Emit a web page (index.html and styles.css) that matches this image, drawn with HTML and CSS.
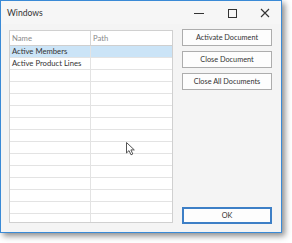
FILE: index.html
```html
<!DOCTYPE html>
<html>
<head>
<meta charset="utf-8">
<link rel="stylesheet" href="styles.css">
</head>
<body>
<div class="stage">
  <div class="window">
    <div class="titlebar">
      <span class="title">Windows</span>
      <div class="controls">
        <span class="ctl"><svg width="12" height="12" viewBox="0 0 12 12"><line x1="1" y1="6.5" x2="11" y2="6.5" stroke="#333" stroke-width="1"/></svg></span>
        <span class="ctl"><svg width="12" height="12" viewBox="0 0 12 12"><rect x="2.5" y="2.5" width="8" height="8" fill="none" stroke="#333" stroke-width="1"/></svg></span>
        <span class="ctl"><svg width="12" height="12" viewBox="0 0 12 12"><path d="M2 2 L10 10 M10 2 L2 10" stroke="#333" stroke-width="1.1"/></svg></span>
      </div>
    </div>
    <div class="content">
      <div class="grid">
        <div class="row head"><div class="c1">Name</div><div class="c2">Path</div></div>
        <div class="row sel"><div class="c1">Active Members</div><div class="c2"></div></div>
        <div class="row"><div class="c1">Active Product Lines</div><div class="c2"></div></div>
        <div class="row"><div class="c1"></div><div class="c2"></div></div>
        <div class="row"><div class="c1"></div><div class="c2"></div></div>
        <div class="row"><div class="c1"></div><div class="c2"></div></div>
        <div class="row"><div class="c1"></div><div class="c2"></div></div>
        <div class="row"><div class="c1"></div><div class="c2"></div></div>
        <div class="row"><div class="c1"></div><div class="c2"></div></div>
        <div class="row"><div class="c1"></div><div class="c2"></div></div>
        <div class="row"><div class="c1"></div><div class="c2"></div></div>
        <div class="row"><div class="c1"></div><div class="c2"></div></div>
        <div class="row"><div class="c1"></div><div class="c2"></div></div>
        <div class="row"><div class="c1"></div><div class="c2"></div></div>
        <div class="row"><div class="c1"></div><div class="c2"></div></div>
        <div class="row"><div class="c1"></div><div class="c2"></div></div>
        <svg class="cursor" width="10" height="14" viewBox="0 0 10 14"><path d="M0.5 0.5 L0.5 11 L3 8.6 L5 12.8 L6.8 12 L4.9 7.9 L8.3 7.9 Z" fill="#fff" stroke="#555" stroke-width="1" stroke-linejoin="round"/></svg>
      </div>
      <div class="buttons">
        <button class="btn">Activate Document</button>
        <button class="btn">Close Document</button>
        <button class="btn">Close All Documents</button>
        <button class="btn ok">OK</button>
      </div>
    </div>
  </div>
</div>
</body>
</html>
```
FILE: styles.css
```css
* { box-sizing: border-box; }
html, body { margin: 0; padding: 0; background: #ffffff; }
body { font-family: "Lato", "Noto Sans", sans-serif; }
.stage { width: 292px; height: 243px; position: relative; overflow: hidden; }
.window {
  width: 282px; height: 233px;
  border: 1px solid #3a8ad6;
  background: #f4f4f4;
  box-shadow: 3px 3px 6px rgba(0,0,0,0.45);
  display: flex; flex-direction: column;
}
.titlebar {
  height: 23px; display: flex; align-items: center; justify-content: space-between;
  padding-left: 6px; background: #f6f6f6;
}
.title { font-size: 8.6px; color: #333; }
.controls { display: flex; height: 100%; }
.ctl { width: 33px; height: 100%; display: flex; align-items: center; justify-content: center; }
.content { flex: 1; display: flex; padding: 6px 8px 8px 8px; gap: 9px; }
.grid {
  width: 164px; height: 193px; border: 1px solid #d0d0d0; background: #fff;
  overflow: hidden; position: relative;
}
.row { display: flex; height: 12px; border-bottom: 1px solid #e3e3e3; font-size: 7.7px; line-height: 11px; color: #333; }
.row.head { height: 15px; border-bottom: 1px solid #cfcfcf; color: #8a8a8a; line-height: 14px; }
.row.sel { background: #cbe4f7; }
.c1 { width: 81px; border-right: 1px solid #e3e3e3; padding-left: 2px; white-space: nowrap; overflow: hidden; }
.head .c1 { border-right-color: #d6d6d6; }
.c2 { flex: 1; padding-left: 2px; }
.cursor { position: absolute; left: 116px; top: 111px; }
.buttons { width: 90px; display: flex; flex-direction: column; gap: 5px; margin-top: -1px; }
.btn {
  height: 17px; border: 1px solid #adadad; background: #fdfdfd; font-family: inherit;
  font-size: 7.3px; color: #333; padding: 0; line-height: 15px;
}
.btn.ok { margin-top: auto; margin-bottom: 0; border: 2px solid #3d7fc6; line-height: 13px; }
```
